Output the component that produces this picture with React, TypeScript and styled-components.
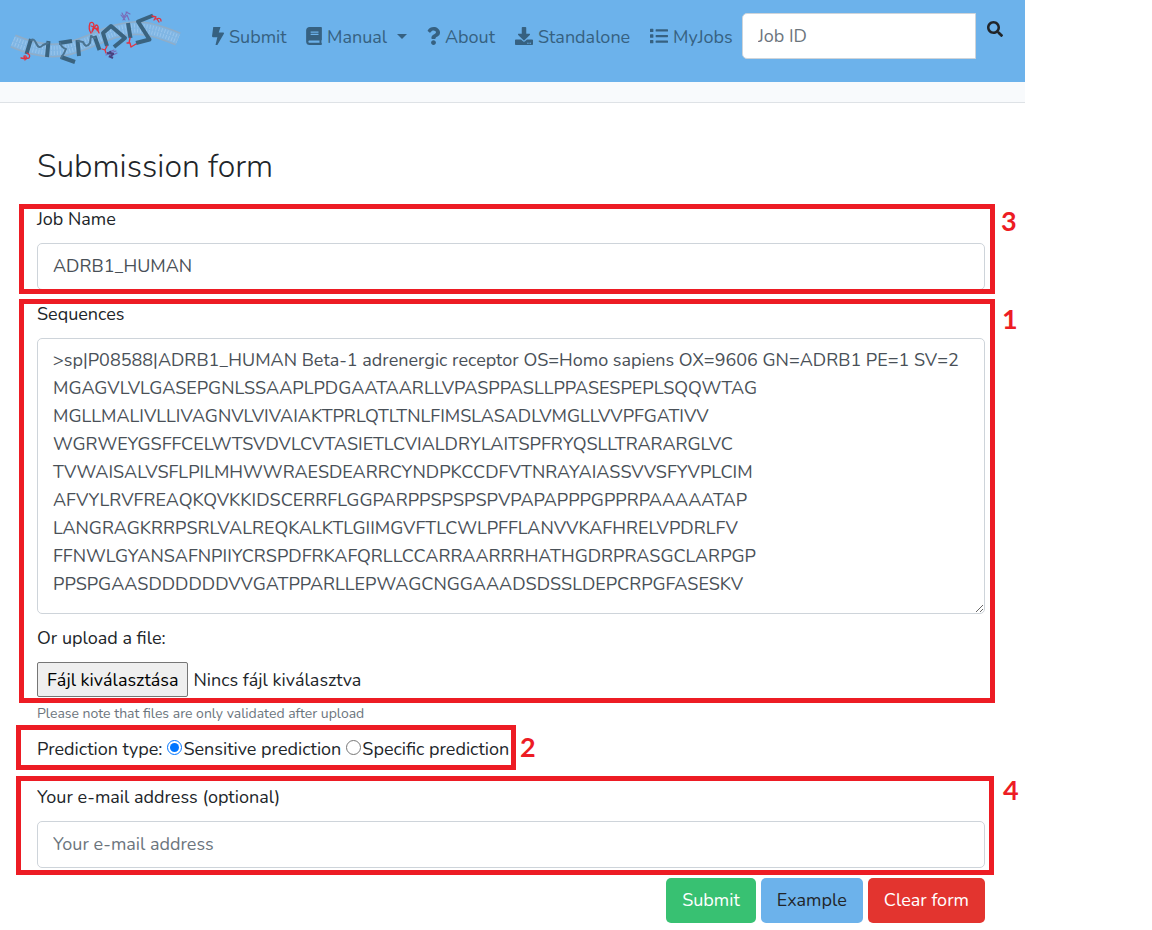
import React, { useRef, useState } from "react";
import styled, { createGlobalStyle } from "styled-components";
import { FaBolt, FaBook, FaDownload, FaList, FaQuestion, FaSearch } from "react-icons/fa";

const RED = "#ed1c24";

const GlobalStyle = createGlobalStyle`
  *, *::before, *::after { box-sizing: border-box; }
  body {
    margin: 0;
    background: #fff;
    color: #212529;
    font-family: Nunito, Lato, "Open Sans", sans-serif;
    font-size: 18px;
    line-height: 28px;
  }
  button, input, textarea { font: inherit; margin: 0; }
`;

const Page = styled.div`
  width: 100%;
  max-width: 1025px;
`;

const Navbar = styled.header`
  display: flex;
  align-items: flex-start;
  height: 82px;
  padding: 0 20px 0 10px;
  background: #6cb2eb;
`;

const Brand = styled.a`
  display: block;
  flex: none;
  width: 192px;
  height: 72px;
`;

const NavList = styled.nav`
  display: grid;
  grid-template-columns: 94px 121px 88px 135px 102px;
  padding-top: 23px;
`;

const NavLink = styled.a<{ $icon: number }>`
  display: flex;
  align-items: center;
  gap: 5px;
  padding: 0 10px;
  color: #366181;
  text-decoration: none;
  white-space: nowrap;
  svg {
    flex: none;
    width: ${(p) => p.$icon}px;
    height: 18px;
    margin-bottom: 2px;
  }
`;

const Caret = styled.span`
  margin: 0 0 2px 5px;
  border-top: 5px solid;
  border-left: 5px solid transparent;
  border-right: 5px solid transparent;
`;

const SearchForm = styled.form`
  display: flex;
  flex: 1;
  align-items: flex-start;
  padding-top: 13px;
`;

const TextInput = styled.input<{ $joined?: boolean }>`
  display: block;
  width: 100%;
  min-width: 0;
  height: ${(p) => (p.$joined ? 46 : 47)}px;
  padding: 0 15px ${(p) => (p.$joined ? 0 : 2)}px;
  border: 1px solid #ced4da;
  border-radius: ${(p) => (p.$joined ? "5px 0 0 5px" : "5px")};
  background: #fff;
  color: #495057;
  &::placeholder { color: #6c757d; opacity: 1; }
`;

const SearchButton = styled.button`
  flex: none;
  padding: 8px 2px 8px 11px;
  border: 0;
  background: none;
  color: #212529;
  line-height: 0;
  svg { width: 16px; height: 16px; }
`;

const SubBar = styled.div`
  height: 21px;
  border-bottom: 1px solid #dee2e6;
  background: #f8fafc;
`;

const Main = styled.main`
  padding: 44px 40px 7px 37px;
`;

const Title = styled.h1`
  margin: 0 0 18px;
  font-size: 32px;
  font-weight: 300;
  line-height: 40px;
`;

const Group = styled.div<{ $space: number }>`
  position: relative;
  margin-bottom: ${(p) => p.$space}px;
`;

const Label = styled.label`
  display: block;
  margin-bottom: 10px;
`;

const Sequences = styled.textarea`
  display: block;
  width: 100%;
  height: 276px;
  margin-bottom: 10px;
  padding: 7px 15px;
  border: 1px solid #ced4da;
  border-radius: 5px;
  background: #fff;
  color: #495057;
  overflow: hidden;
  resize: vertical;
`;

const FileRow = styled.div`
  display: flex;
  align-items: center;
  gap: 5px;
`;

const FileButton = styled.button`
  height: 35px;
  padding: 0 9px;
  border: 1px solid #767676;
  border-radius: 2px;
  background: #efefef;
  color: #000;
`;

const Note = styled.small`
  display: block;
  margin: 7px 0 11px;
  color: #6c757d;
  font-size: 14px;
  line-height: 20px;
`;

const Choices = styled.div`
  display: flex;
  align-items: center;
  gap: 5px;
`;

const Choice = styled.label`
  display: flex;
  align-items: center;
  gap: 1px;
`;

const Radio = styled.input`
  && { margin-bottom: 4px; }
  width: 15px;
  height: 15px;
  accent-color: #0075ff;
`;

const Actions = styled.div`
  display: flex;
  justify-content: flex-end;
  gap: 5px;
`;

const Action = styled.button<{ $bg: string; $fg: string }>`
  height: 45px;
  padding: 0 16px 2px;
  border: 0;
  border-radius: 5px;
  background: ${(p) => p.$bg};
  color: ${(p) => p.$fg};
`;

const Mark = styled.div<{ $inset: string }>`
  position: absolute;
  inset: ${(p) => p.$inset};
  border: 5px solid ${RED};
  pointer-events: none;
`;

const MarkNumber = styled.span<{ $top: number; $gap: number }>`
  position: absolute;
  top: ${(p) => p.$top}px;
  left: calc(100% + ${(p) => p.$gap}px);
  color: ${RED};
  font-family: Lato, sans-serif;
  font-size: 27px;
  font-weight: 700;
  line-height: 28px;
`;

const SEQUENCE = `>sp|P08588|ADRB1_HUMAN Beta-1 adrenergic receptor OS=Homo sapiens OX=9606 GN=ADRB1 PE=1 SV=2
MGAGVLVLGASEPGNLSSAAPLPDGAATAARLLVPASPPASLLPPASESPEPLSQQWTAG
MGLLMALIVLLIVAGNVLVIVAIAKTPRLQTLTNLFIMSLASADLVMGLLVVPFGATIVV
WGRWEYGSFFCELWTSVDVLCVTASIETLCVIALDRYLAITSPFRYQSLLTRARARGLVC
TVWAISALVSFLPILMHWWRAESDEARRCYNDPKCCDFVTNRAYAIASSVVSFYVPLCIM
AFVYLRVFREAQKQVKKIDSCERRFLGGPARPPSPSPSPVPAPAPPPGPPRPAAAAATAP
LANGRAGKRRPSRLVALREQKALKTLGIIMGVFTLCWLPFFLANVVKAFHRELVPDRLFV
FFNWLGYANSAFNPIIYCRSPDFRKAFQRLLCCARRAARRRHATHGDRPRASGCLARPGP
PPSPGAASDDDDDDVVGATPPARLLEPWAGCNGGAAADSDSSLDEPCRPGFASESKV`;

const MEMBRANE = "M13 41 C34 50 54 53 70 48 C96 41 110 29 136 28 C151 28 166 34 178 39";

function Logo() {
  return (
    <svg width="192" height="72" viewBox="10 0 192 72" fill="none" role="img" aria-label="MemDis">
      <path d={MEMBRANE} stroke="#8fadc8" strokeWidth="14" />
      <path d={MEMBRANE} stroke="#80b6e4" strokeWidth="11" />
      <path d={MEMBRANE} stroke="#98c5ec" strokeWidth="9" strokeDasharray="1 2" />
      <path d={MEMBRANE} stroke="#80b6e4" strokeWidth="1" />
      <g stroke="#3a637f" strokeWidth="4" strokeLinejoin="round">
        <path d="M26.500 54 L31 39 M48.500 41 L47 57" />
        <path d="M72 41 L59 43 M61 57 L75 62" />
        <path d="M77.500 40 L79 56 M94.500 36 L99.500 50" />
        <path d="M107 46 L103 33 L111 26 L125 38 L114 47" />
        <path d="M128 23 L130.500 38" />
        <path d="M153 15.500 L138 21.500 L149.500 39.500 L136 43" />
      </g>
      <g stroke="#4b7390" strokeWidth="2" strokeLinecap="round" strokeLinejoin="round">
        <path d="M31 40 Q34 38 36 43 Q39 50 43 45 L48 43" />
        <path d="M60 43 Q62 48 66 49 Q64 54 61 58" />
        <path d="M78 41 L83 42 Q86 49 90 43 L91 36 L95 38" />
      </g>
      <g stroke="#e1313f" strokeWidth="1.3" strokeLinecap="round" strokeLinejoin="round">
        <path d="M27 53 Q31 55 29 58 Q24 59 24 56 Q27 55 26 59 L21 58 M24 57 L25 60" />
        <path d="M91 33 Q88 29 90 23 Q93 21 94 25 L92 32 L96 25 Q99 25 98 31 L94 27 L91 26 M97 28 L99 33" />
        <path d="M107 46 L105 50 L102 49 M105 50 L106 53" />
        <path d="M130 38 L129 43 L127 43 M130 43 L131 47 L136 44" />
        <path d="M152 16 L156 17 L154 20 M156 19 Q161 17 161 21 M157 19 L159 22" />
      </g>
      <g stroke="#7a69b6" strokeWidth="1.1" strokeLinecap="round" strokeLinejoin="round">
        <path d="M122 13 L124 17 L127 12 M123 20 L127 15 L129 20 M126 12 L130 14 M121 15 L125 20" />
        <path d="M107 53 L114 50 M106 55 L116 51 M109 57 L117 53" />
      </g>
      <path d="M107 53 L114 54 M109 56 L113 58 M110 51 L112 56" stroke="#46417d" strokeWidth="2" />
    </svg>
  );
}

export default function App() {
  const fileRef = useRef<HTMLInputElement>(null);
  const [fileName, setFileName] = useState("Nincs fájl kiválasztva");

  return (
    <>
      <GlobalStyle />
      <Page>
        <Navbar>
          <Brand href="#"><Logo /></Brand>
          <NavList>
            <NavLink $icon={12} href="#submit"><FaBolt preserveAspectRatio="xMidYMid slice" />Submit</NavLink>
            <NavLink $icon={16} href="#manual"><FaBook />Manual<Caret /></NavLink>
            <NavLink $icon={13} href="#about"><FaQuestion preserveAspectRatio="xMidYMid slice" />About</NavLink>
            <NavLink $icon={18} href="#standalone"><FaDownload />Standalone</NavLink>
            <NavLink $icon={18} href="#myjobs"><FaList />MyJobs</NavLink>
          </NavList>
          <SearchForm onSubmit={(e) => e.preventDefault()}>
            <TextInput $joined placeholder="Job ID" aria-label="Job ID" />
            <SearchButton type="submit" aria-label="Search"><FaSearch /></SearchButton>
          </SearchForm>
        </Navbar>
        <SubBar />
        <Main>
          <Title>Submission form</Title>
          <form onSubmit={(e) => e.preventDefault()}>
            <Group $space={10}>
              <Label htmlFor="job-name">Job Name</Label>
              <TextInput id="job-name" defaultValue="ADRB1_HUMAN" />
              <Mark $inset="-1px -10px -4px -18px"><MarkNumber $top={-2} $gap={11}>3</MarkNumber></Mark>
            </Group>
            <Group $space={0}>
              <Label htmlFor="sequences">Sequences</Label>
              <Sequences id="sequences" defaultValue={SEQUENCE} spellCheck={false} />
              <Label htmlFor="sequence-file">Or upload a file:</Label>
              <FileRow>
                <input
                  id="sequence-file"
                  type="file"
                  hidden
                  ref={fileRef}
                  onChange={(e) => setFileName(e.target.files?.[0]?.name ?? "Nincs fájl kiválasztva")}
                />
                <FileButton type="button" onClick={() => fileRef.current?.click()}>Fájl kiválasztása</FileButton>
                <span>{fileName}</span>
              </FileRow>
              <Mark $inset="-1px -10px -6px -18px"><MarkNumber $top={1} $gap={12}>1</MarkNumber></Mark>
            </Group>
            <Note>Please note that files are only validated after upload</Note>
            <Group $space={20}>
              <Choices role="radiogroup" aria-label="Prediction type">
                <span>Prediction type:</span>
                <Choice><Radio type="radio" name="prediction" defaultChecked />Sensitive prediction</Choice>
                <Choice><Radio type="radio" name="prediction" />Specific prediction</Choice>
              </Choices>
              <Mark $inset="-10px 469px -7px -21px"><MarkNumber $top={3} $gap={9}>2</MarkNumber></Mark>
            </Group>
            <Group $space={10}>
              <Label htmlFor="email">Your e-mail address (optional)</Label>
              <TextInput id="email" type="email" placeholder="Your e-mail address" />
              <Mark $inset="-7px -9px -7px -21px"><MarkNumber $top={-5} $gap={14}>4</MarkNumber></Mark>
            </Group>
            <Actions>
              <Action type="submit" $bg="#38c172" $fg="#fff">Submit</Action>
              <Action type="button" $bg="#6cb2eb" $fg="#212529">Example</Action>
              <Action type="reset" $bg="#e3342f" $fg="#fff">Clear form</Action>
            </Actions>
          </form>
        </Main>
      </Page>
    </>
  );
}
